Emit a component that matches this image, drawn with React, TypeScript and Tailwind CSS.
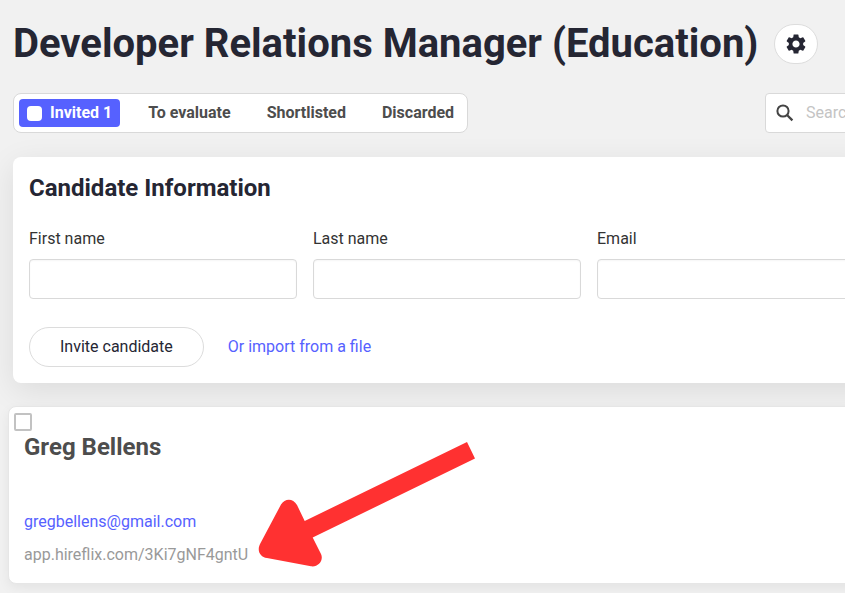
import React from "react";
import { MdSettings } from "react-icons/md";

interface FieldProps {
  id: string;
  label: string;
  type?: string;
}

const Field: React.FC<FieldProps> = ({ id, label, type = "text" }) => (
  <div className="flex flex-col gap-2">
    <label htmlFor={id} className="text-base leading-6 text-[#333333]">
      {label}
    </label>
    <input
      id={id}
      type={type}
      className="h-10 w-full rounded border border-[#d9d9d9] bg-white px-3 text-base shadow-[inset_0_1px_2px_rgba(0,0,0,0.04)] outline-none"
    />
  </div>
);

const tabs = ["To evaluate", "Shortlisted", "Discarded"];

const PageHeader: React.FC = () => (
  <header className="flex items-center gap-4 pt-5">
    <h1 className="whitespace-nowrap text-[40px] font-bold leading-12 text-[#252633]">
      Developer Relations Manager (Education)
    </h1>
    <button
      type="button"
      aria-label="Settings"
      className="flex h-10 w-11 shrink-0 items-center justify-center rounded-full border border-[#dddddd] bg-white text-[#252633]"
    >
      <MdSettings className="h-6 w-6" />
    </button>
  </header>
);

const Toolbar: React.FC = () => (
  <div className="-mr-40 mt-[25px] flex items-center justify-between">
    <nav className="flex h-10 items-center rounded-lg border border-[#d9d9d9] bg-white p-[5px] text-base font-bold text-[#4d4d4d]">
      <button type="button" className="mr-2.5 flex h-7 items-center gap-2 rounded bg-[#5661ff] px-2 text-white">
        <span className="h-[15px] w-[15px] rounded bg-white" />
        Invited 1
      </button>
      <div className="flex">
        {tabs.map((tab) => (
          <button key={tab} type="button" className="px-[18px] last:pr-2">
            {tab}
          </button>
        ))}
      </div>
    </nav>
    <div className="flex h-10 w-60 items-center gap-3 rounded border border-[#d9d9d9] bg-white pl-2.5">
      <svg viewBox="0 0 18 18" className="h-[18px] w-[18px] shrink-0" fill="none" stroke="#444444" strokeWidth="2">
        <circle cx="7" cy="7" r="5.6" />
        <path d="M11 11l5.4 5.4" strokeWidth="2.3" />
      </svg>
      <input
        type="search"
        aria-label="Search"
        placeholder="Search"
        className="w-full min-w-0 bg-transparent text-base outline-none placeholder:text-[#c4c4c4]"
      />
    </div>
  </div>
);

const InviteForm: React.FC = () => (
  <section className="-mr-9 mt-6 rounded-lg bg-white px-4 pb-4 pt-[15px] shadow-[0_8px_32px_rgba(0,0,0,0.09)]">
    <h2 className="text-2xl font-bold leading-8 text-[#252633]">Candidate Information</h2>
    <div className="mt-[23px] grid grid-cols-3 gap-4">
      <Field id="first-name" label="First name" />
      <Field id="last-name" label="Last name" />
      <Field id="email" label="Email" type="email" />
    </div>
    <div className="mt-7 flex items-center gap-6">
      <button type="button" className="h-10 rounded-full border border-[#dcdcdc] px-[30px] text-base text-[#252633]">
        Invite candidate
      </button>
      <a href="#import" className="text-base text-[#5661ff]">
        Or import from a file
      </a>
    </div>
  </section>
);

const CandidateCard: React.FC = () => (
  <article className="relative -ml-[5px] -mr-9 mt-[23px] rounded-lg border border-[#e6e6e6] bg-white px-[5px] pb-4 pt-1.5 shadow-[0_4px_12px_rgba(0,0,0,0.06)]">
    <input
      type="checkbox"
      aria-label="Select Greg Bellens"
      className="block h-[18px] w-[18px] appearance-none rounded-xs border-2 border-[#c2c2c2] bg-white checked:bg-[#5661ff]"
    />
    <div className="flex flex-col px-2.5">
      <h3 className="text-2xl font-bold leading-8 text-[#4d4d4d]">Greg Bellens</h3>
      <a href="mailto:gregbellens@gmail.com" className="mt-[47px] self-start text-base leading-6 text-[#5661ff]">
        gregbellens@gmail.com
      </a>
      <a href="https://app.hireflix.com/3Ki7gNF4gntU" className="mt-[9px] self-start text-base leading-6 text-[#999999]">
        app.hireflix.com/3Ki7gNF4gntU
      </a>
    </div>
    <svg viewBox="258 441 218 127" className="absolute left-[249px] top-[34px] h-[127px] w-[218px]" aria-hidden="true">
      <path
        fill="#ff3131"
        d="M467 442L304.700 521L297 505C293 498 285 498 281 504.500L260.300 543.500C256.500 550.500 260 557 267 558L311 566.300C318 567.500 324 560.500 321 554L312.700 537.500L475 458.500Z"
      />
    </svg>
  </article>
);

export default function App() {
  return (
    <main className="min-h-screen overflow-hidden bg-[#f1f1f1] pb-2.5 pl-[13px] font-['Roboto',sans-serif]">
      <PageHeader />
      <Toolbar />
      <InviteForm />
      <CandidateCard />
    </main>
  );
}
